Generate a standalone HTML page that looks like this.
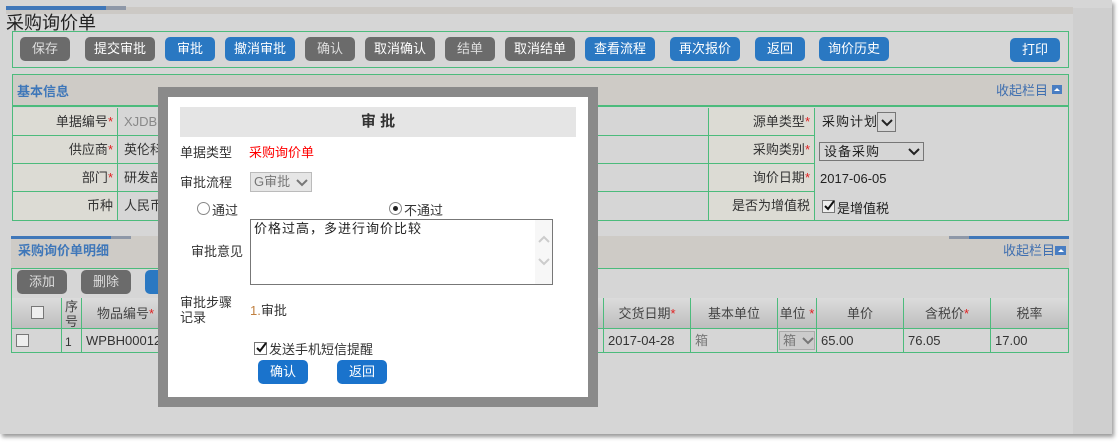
<!DOCTYPE html>
<html><head><meta charset="utf-8"><style>
*{margin:0;padding:0;box-sizing:border-box}
body{width:1119px;height:443px;background:#fff;position:relative;overflow:hidden;font-family:"Liberation Sans","Noto Sans CJK SC",sans-serif;font-size:13px;color:#333}
.a{position:absolute}
.btn{position:absolute;height:24px;border-radius:5px;color:#fff;text-align:center;line-height:24px;font-size:13px}
.g{background:#6b6b6b;color:#ddd}
.b{background:#2a78c2}
.gb{position:absolute;border:1px solid #4cbb7c}
.cell{position:absolute;border-right:1px solid #4cbb7c;border-bottom:1px solid #4cbb7c}
.lab{background:#dcdbd4;text-align:right;padding-right:4px;line-height:27px}
.val{line-height:27px;padding-left:6px}
.th{position:absolute;top:298px;height:31px;background:linear-gradient(#dcdcdc,#bdbdbd);border-right:1px solid #4cbb7c;text-align:center;line-height:31px;color:#444}
.td{position:absolute;top:329px;height:23px;border-right:1px solid #4cbb7c;line-height:23px;padding-left:4px;white-space:nowrap;overflow:hidden}
.r{color:#e02020}
.cb{position:absolute;width:13px;height:13px;border:1px solid #777;background:#eee}
.chev{position:absolute;width:12px;height:8px}
</style></head><body>
<div class="a" style="left:0;top:0;width:1112px;height:434px;background:#d6d6d6;box-shadow:2px 3px 4px #999"></div>
<div class="a" style="left:1073px;top:8px;width:39px;height:426px;background:#cfcfcf"></div>
<div class="a" style="left:6px;top:7px;width:1067px;height:7px;background:#ccc9c5"></div>
<div class="a" style="left:6px;top:6px;width:100px;height:4px;background:#3f77b9"></div>
<div class="a" style="left:106px;top:6px;width:20px;height:4px;background:#8e98a8"></div>
<div class="a" style="left:6px;top:12px;font-size:18px;color:#222;line-height:22px">采购询价单</div>

<div class="gb" style="left:12px;top:31px;width:1057px;height:37px"></div>
<div class="btn g" style="left:20px;top:37px;width:50px">保存</div>
<div class="btn g" style="left:85px;top:37px;width:70px;color:#fff">提交审批</div>
<div class="btn b" style="left:165px;top:37px;width:50px">审批</div>
<div class="btn b" style="left:225px;top:37px;width:70px">撤消审批</div>
<div class="btn g" style="left:305px;top:37px;width:50px">确认</div>
<div class="btn g" style="left:365px;top:37px;width:70px;color:#fff">取消确认</div>
<div class="btn g" style="left:445px;top:37px;width:50px">结单</div>
<div class="btn g" style="left:505px;top:37px;width:70px;color:#fff">取消结单</div>
<div class="btn b" style="left:585px;top:37px;width:70px">查看流程</div>
<div class="btn b" style="left:670px;top:37px;width:70px">再次报价</div>
<div class="btn b" style="left:755px;top:37px;width:50px">返回</div>
<div class="btn b" style="left:819px;top:37px;width:70px">询价历史</div>
<div class="btn b" style="left:1010px;top:38px;width:50px">打印</div>

<div class="a" style="left:12px;top:74px;width:1057px;height:147px;border:1px solid #4cbb7c;background:#d6d6d6"></div>
<div class="a" style="left:13px;top:75px;width:1055px;height:32px;background:#cecbc6;border-bottom:2px solid #4cbb7c"></div>
<div class="a" style="left:17px;top:84px;font-weight:bold;color:#3f77b9;line-height:16px">基本信息</div>
<div class="a" style="left:996px;top:83px;color:#3f6fb0;line-height:16px">收起栏目</div>
<div class="a" style="left:1052px;top:85px;width:10px;height:9px;background:#4a7ec2"><div style="margin:3px auto 0;width:0;height:0;border-left:3px solid transparent;border-right:3px solid transparent;border-bottom:3px solid #fff"></div></div>

<div class="cell lab" style="left:13px;top:108px;width:105px;height:28px">单据编号<span class="r">*</span></div>
<div class="cell lab" style="left:13px;top:136px;width:105px;height:28px">供应商<span class="r">*</span></div>
<div class="cell lab" style="left:13px;top:164px;width:105px;height:28px">部门<span class="r">*</span></div>
<div class="cell lab" style="left:13px;top:192px;width:105px;height:28px;border-bottom:none">币种</div>
<div class="cell val" style="left:118px;top:108px;width:591px;height:28px;color:#888">XJDB</div>
<div class="cell val" style="left:118px;top:136px;width:591px;height:28px">英伦科</div>
<div class="cell val" style="left:118px;top:164px;width:591px;height:28px">研发部</div>
<div class="cell val" style="left:118px;top:192px;width:591px;height:28px;border-bottom:none">人民币</div>
<div class="cell lab" style="left:709px;top:108px;width:106px;height:28px">源单类型<span class="r">*</span></div>
<div class="cell lab" style="left:709px;top:136px;width:106px;height:28px">采购类别<span class="r">*</span></div>
<div class="cell lab" style="left:709px;top:164px;width:106px;height:28px">询价日期<span class="r">*</span></div>
<div class="cell lab" style="left:709px;top:192px;width:106px;height:28px;border-bottom:none">是否为增值税</div>
<div class="a" style="left:822px;top:114px;line-height:16px;color:#222;letter-spacing:1px">采购计划</div>
<div class="a" style="left:877px;top:112px;width:19px;height:20px;border:1px solid #777"><svg class="chev" style="left:3px;top:6px" viewBox="0 0 12 8"><path d="M1 1L6 6L11 1" fill="none" stroke="#222" stroke-width="2"/></svg></div>
<div class="a" style="left:819px;top:142px;width:105px;height:19px;border:1px solid #777;line-height:17px;padding-left:4px;color:#222;letter-spacing:1px">设备采购<svg class="chev" style="left:88px;top:5px" viewBox="0 0 12 8"><path d="M1 1L6 6L11 1" fill="none" stroke="#222" stroke-width="2"/></svg></div>
<div class="a" style="left:820px;top:172px;line-height:14px;color:#222">2017-06-05</div>
<div class="cb" style="left:822px;top:200px"><svg style="position:absolute;left:0;top:-1px" width="12" height="12" viewBox="0 0 12 12"><path d="M2 6L5 9L11 1" fill="none" stroke="#111" stroke-width="2"/></svg></div>
<div class="a" style="left:837px;top:202px;line-height:14px;color:#222">是增值税</div>

<div class="a" style="left:11px;top:236px;width:1058px;height:32px;background:#cecbc6"></div>
<div class="a" style="left:11px;top:236px;width:100px;height:3px;background:#3f77b9"></div>
<div class="a" style="left:111px;top:236px;width:20px;height:3px;background:#8e98a8"></div>
<div class="a" style="left:949px;top:236px;width:20px;height:3px;background:#8e98a8"></div>
<div class="a" style="left:969px;top:236px;width:100px;height:3px;background:#3f77b9"></div>
<div class="a" style="left:18px;top:243px;font-weight:bold;color:#3f77b9;line-height:16px">采购询价单明细</div>
<div class="a" style="left:1003px;top:243px;color:#3f6fb0;line-height:16px">收起栏目</div>
<div class="a" style="left:1055px;top:246px;width:11px;height:9px;background:#4a7ec2"><div style="margin:3px auto 0;width:0;height:0;border-left:3px solid transparent;border-right:3px solid transparent;border-bottom:3px solid #fff"></div></div>
<div class="gb" style="left:11px;top:268px;width:1058px;height:31px;background:#d6d6d6"></div>
<div class="btn g" style="left:17px;top:270px;width:50px">添加</div>
<div class="btn g" style="left:81px;top:270px;width:50px">删除</div>
<div class="btn b" style="left:145px;top:270px;width:50px"></div>
<div class="a" style="left:11px;top:298px;width:1058px;height:55px;border:1px solid #4cbb7c;border-top:none"></div>
<div class="th" style="left:12px;width:50px"></div><div class="cb" style="left:31px;top:306px"></div>
<div class="th" style="left:62px;width:20px;line-height:15px;padding-top:1px">序<br>号</div>
<div class="th" style="left:82px;width:522px;text-align:left;padding-left:15px">物品编号<span class="r">*</span></div>
<div class="th" style="left:604px;width:87px">交货日期<span class="r">*</span></div>
<div class="th" style="left:691px;width:87px">基本单位</div>
<div class="th" style="left:778px;width:39px">单位 <span class="r">*</span></div>
<div class="th" style="left:817px;width:87px">单价</div>
<div class="th" style="left:904px;width:87px">含税价<span class="r">*</span></div>
<div class="th" style="left:991px;width:77px;border-right:none">税率</div>
<div class="a" style="left:12px;top:328px;width:1056px;height:1px;background:#4cbb7c"></div>
<div class="td" style="left:12px;width:50px"></div><div class="cb" style="left:16px;top:334px"></div>
<div class="td" style="left:62px;width:20px;padding-left:3px;line-height:26px;font-size:12px">1</div>
<div class="td" style="left:82px;width:522px">WPBH00012</div>
<div class="td" style="left:604px;width:87px">2017-04-28</div>
<div class="td" style="left:691px;width:87px;color:#777">箱</div>
<div class="td" style="left:778px;width:39px;padding:0"><div style="position:absolute;left:1px;top:2px;width:36px;height:19px;border:1px solid #aaa;background:#ccc;color:#777;line-height:17px;padding-left:3px">箱<svg class="chev" style="left:22px;top:5px" viewBox="0 0 12 8"><path d="M1 1L6 6L11 1" fill="none" stroke="#777" stroke-width="2"/></svg></div></div>
<div class="td" style="left:817px;width:87px">65.00</div>
<div class="td" style="left:904px;width:87px">76.05</div>
<div class="td" style="left:991px;width:77px;border-right:none">17.00</div>

<div class="a" style="left:158px;top:87px;width:440px;height:320px;background:#8a8a8a"></div>
<div class="a" style="left:168px;top:97px;width:420px;height:300px;background:#fff"></div>
<div class="a" style="left:180px;top:107px;width:396px;height:30px;background:#e5e5e5;text-align:center;line-height:30px;font-weight:bold;font-size:15px;color:#333">审 批</div>
<div class="a" style="left:180px;top:145px;line-height:16px">单据类型</div>
<div class="a" style="left:249px;top:145px;line-height:16px;color:#f00">采购询价单</div>
<div class="a" style="left:180px;top:175px;line-height:16px">审批流程</div>
<div class="a" style="left:250px;top:172px;width:62px;height:20px;border:1px solid #bbb;background:#e6e6e6;color:#777;line-height:18px;padding-left:3px">G审批<svg class="chev" style="left:45px;top:6px" viewBox="0 0 12 8"><path d="M1 1L6 6L11 1" fill="none" stroke="#777" stroke-width="2"/></svg></div>
<div class="a" style="left:197px;top:202px;width:13px;height:13px;border:1px solid #888;border-radius:50%"></div>
<div class="a" style="left:212px;top:203px;line-height:15px">通过</div>
<div class="a" style="left:389px;top:202px;width:13px;height:13px;border:1px solid #888;border-radius:50%"><div style="margin:3px;width:5px;height:5px;border-radius:50%;background:#222"></div></div>
<div class="a" style="left:404px;top:203px;line-height:15px">不通过</div>
<div class="a" style="left:250px;top:219px;width:303px;height:66px;border:1px solid #777"><div style="position:absolute;right:0;top:0;width:17px;height:64px;background:#f7f7f7"><svg style="position:absolute;left:3px;top:15px" width="12" height="8" viewBox="0 0 12 8"><path d="M1 7L6 2L11 7" fill="none" stroke="#ccc" stroke-width="2"/></svg><svg style="position:absolute;left:3px;top:38px" width="12" height="8" viewBox="0 0 12 8"><path d="M1 1L6 6L11 1" fill="none" stroke="#ccc" stroke-width="2"/></svg></div></div>
<div class="a" style="left:254px;top:221px;line-height:16px;color:#222;letter-spacing:1px">价格过高，多进行询价比较</div>
<div class="a" style="left:191px;top:244px;line-height:16px">审批意见</div>
<div class="a" style="left:180px;top:295px;line-height:15px">审批步骤<br>记录</div>
<div class="a" style="left:250px;top:303px;line-height:16px"><span style="color:#c08040">1.</span>审批</div>
<div class="cb" style="left:254px;top:342px;background:#fff"><svg style="position:absolute;left:0;top:-1px" width="12" height="12" viewBox="0 0 12 12"><path d="M2 6L5 9L11 1" fill="none" stroke="#111" stroke-width="2"/></svg></div>
<div class="a" style="left:269px;top:342px;line-height:16px">发送手机短信提醒</div>
<div class="btn" style="left:258px;top:360px;width:50px;background:#1a73cc">确认</div>
<div class="btn" style="left:337px;top:360px;width:50px;background:#1a73cc">返回</div>
</body></html>
